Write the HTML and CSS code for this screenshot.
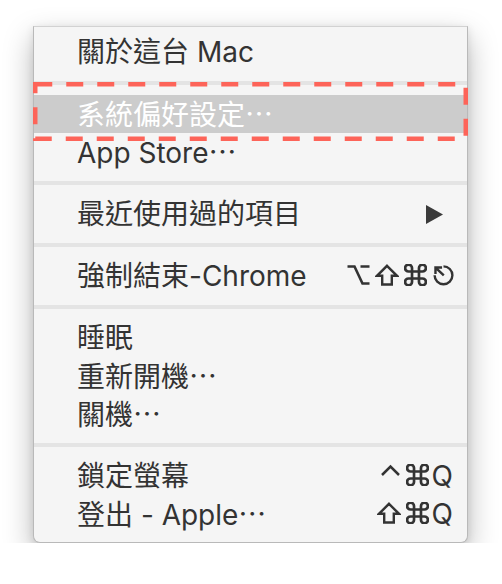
FILE: index.html
```html
<!DOCTYPE html>
<html lang="zh-Hant">
<head>
<meta charset="utf-8">
<link rel="stylesheet" href="styles.css">
</head>
<body>
<div class="menu">
  <div class="item"><span class="label">關於這台 Mac</span></div>
  <div class="sep"></div>
  <div class="item active"><span class="label">系統偏好設定<span class="ell">…</span></span></div>
  <div class="item"><span class="label">App Store<span class="ell">…</span></span></div>
  <div class="sep"></div>
  <div class="item"><span class="label">最近使用過的項目</span>
    <svg class="arrow" width="17" height="19" viewBox="0 0 17 19"><polygon points="0,0 17,9.5 0,19" fill="#3a3a3a"/></svg>
  </div>
  <div class="sep"></div>
  <div class="item"><span class="label">強制結束-Chrome</span>
    <span class="keys">
      <svg class="key" width="23" height="22" viewBox="0 0 23 22"><path d="M0.5 2.5 H7.5 L15.5 19.5 H22.5 M13.5 2.5 H22.5" fill="none" stroke="#333" stroke-width="2.6"/></svg>
      <svg class="key" width="24" height="22" viewBox="0 0 24 22"><path d="M12 1.8 L22 11.8 H16.8 V20.5 H7.2 V11.8 H2 Z" fill="none" stroke="#333" stroke-width="2.4" stroke-linejoin="miter"/></svg>
      <svg class="key" width="23" height="22" viewBox="2.2 2.5 19.6 19"><path d="M18 3a3 3 0 0 0-3 3v12a3 3 0 0 0 3 3 3 3 0 0 0 3-3 3 3 0 0 0-3-3H6a3 3 0 0 0-3 3 3 3 0 0 0 3 3 3 3 0 0 0 3-3V6a3 3 0 0 0-3-3 3 3 0 0 0-3 3 3 3 0 0 0 3 3h12a3 3 0 0 0 3-3 3 3 0 0 0-3-3z" fill="none" stroke="#333" stroke-width="2.3"/></svg>
      <svg class="key" width="23" height="22" viewBox="0 0 24 23"><path d="M12 2.5 A9.3 9.3 0 1 1 2.7 11.8" fill="none" stroke="#333" stroke-width="2.5"/><path d="M12.3 12 L4.5 4.5 M3.6 10.5 V3.6 H10.5" fill="none" stroke="#333" stroke-width="2.5"/></svg>
    </span>
  </div>
  <div class="sep"></div>
  <div class="item"><span class="label">睡眠</span></div>
  <div class="item"><span class="label">重新開機<span class="ell">…</span></span></div>
  <div class="item"><span class="label">關機<span class="ell">…</span></span></div>
  <div class="sep"></div>
  <div class="item"><span class="label">鎖定螢幕</span>
    <span class="keys">
      <svg class="key" width="21" height="22" viewBox="0 0 21 22"><path d="M2 11 L10.5 2.5 L19 11" fill="none" stroke="#333" stroke-width="2.5"/></svg>
      <svg class="key" width="23" height="22" viewBox="2.2 2.5 19.6 19"><path d="M18 3a3 3 0 0 0-3 3v12a3 3 0 0 0 3 3 3 3 0 0 0 3-3 3 3 0 0 0-3-3H6a3 3 0 0 0-3 3 3 3 0 0 0 3 3 3 3 0 0 0 3-3V6a3 3 0 0 0-3-3 3 3 0 0 0-3 3 3 3 0 0 0 3 3h12a3 3 0 0 0 3-3 3 3 0 0 0-3-3z" fill="none" stroke="#333" stroke-width="2.3"/></svg>
      <span class="q">Q</span>
    </span>
  </div>
  <div class="item"><span class="label">登出 - Apple<span class="ell">…</span></span>
    <span class="keys">
      <svg class="key" width="24" height="22" viewBox="0 0 24 22"><path d="M12 1.8 L22 11.8 H16.8 V20.5 H7.2 V11.8 H2 Z" fill="none" stroke="#333" stroke-width="2.4" stroke-linejoin="miter"/></svg>
      <svg class="key" width="23" height="22" viewBox="2.2 2.5 19.6 19"><path d="M18 3a3 3 0 0 0-3 3v12a3 3 0 0 0 3 3 3 3 0 0 0 3-3 3 3 0 0 0-3-3H6a3 3 0 0 0-3 3 3 3 0 0 0 3 3 3 3 0 0 0 3-3V6a3 3 0 0 0-3-3 3 3 0 0 0-3 3 3 3 0 0 0 3 3h12a3 3 0 0 0 3-3 3 3 0 0 0-3-3z" fill="none" stroke="#333" stroke-width="2.3"/></svg>
      <span class="q">Q</span>
    </span>
  </div>
  <div class="mark">
    <svg width="435" height="59" viewBox="0 0 435 59"><rect x="2.25" y="2.25" width="430.5" height="54.5" fill="none" stroke="#fd6459" stroke-width="4.5" stroke-dasharray="17 14"/></svg>
  </div>
</div>
</body>
</html>
```

FILE: styles.css
```css
html, body {
  margin: 0;
  background: #ffffff;
}
body {
  font-family: "Inter", "Noto Sans CJK TC", sans-serif;
}
.menu {
  position: relative;
  margin: 26px 0 0 33px;
  width: 435px;
  box-sizing: border-box;
  background: #f5f5f5;
  border: 1px solid #b9b9b9;
  border-top-color: #d2d2d2;
  border-radius: 0 0 7px 7px;
  padding: 6px 0 9px;
  box-shadow: 0 12px 30px rgba(0, 0, 0, 0.28), 0 2px 8px rgba(0, 0, 0, 0.1);
}
.item {
  display: flex;
  align-items: center;
  justify-content: space-between;
  height: 38px;
  padding: 0 12px 0 43px;
  font-size: 28px;
  line-height: 38px;
  color: #333333;
  white-space: nowrap;
}
.active {
  background: #cccccc;
  color: #ffffff;
}
.ell {
  font-family: "Noto Sans CJK TC", sans-serif;
}
.sep {
  height: 4px;
  margin: 10px 0;
  background: #e4e4e4;
}
.arrow {
  margin-right: 12px;
}
.keys {
  display: flex;
  align-items: center;
  gap: 5px;
}
.key {
  display: block;
  margin-top: -2px;
}
.q {
  font-family: "Inter", sans-serif;
  font-size: 28px;
  margin-left: -2px;
  margin-right: 2px;
}
.mark {
  position: absolute;
  left: -1px;
  top: 55px;
  width: 435px;
  height: 59px;
  line-height: 0;
}
```
